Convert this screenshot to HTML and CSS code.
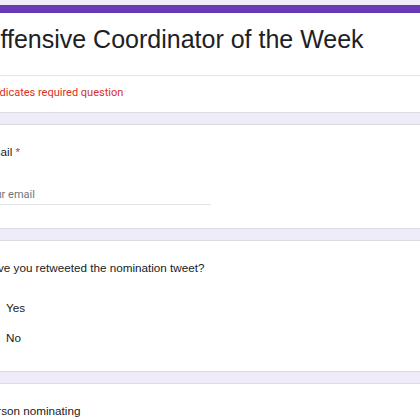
FILE: index.html
```html
<!DOCTYPE html>
<html lang="en">
<head>
    <meta charset="UTF-8">
    <meta name="viewport" content="width=device-width, initial-scale=1.0">
    <title>Offensive Coordinator of the Week</title>
    <link rel="stylesheet" href="styles.css">
</head>
<body>

    <div class="form">
        <div class="card title-card">
            <div class="title-head">
                <h1>Offensive Coordinator of the Week</h1>
            </div>
            <div class="title-note">
                <span class="required-note">* Indicates required question</span>
            </div>
        </div>

        <div class="card">
            <label class="question" for="email">Email <span class="mandatory">*</span></label>
            <div class="field">
                <input type="text" id="email" placeholder="Your email">
            </div>
        </div>

        <div class="card">
            <div class="question">Have you retweeted the nomination tweet?</div>
            <div class="options">
                <label class="option"><span class="radio"></span>Yes</label>
                <label class="option"><span class="radio"></span>No</label>
            </div>
        </div>

        <div class="card">
            <div class="question">Person nominating</div>
        </div>
    </div>

</body>
</html>
```

FILE: styles.css
```css
* {
    box-sizing: border-box;
    margin: 0;
    padding: 0;
}
html, body {
    overflow: hidden;
}
body {
    font-family: "Liberation Sans", Arial, sans-serif;
    background-color: #f0ebf8;
    color: #202124;
    padding-top: 5px;
}
.form {
    width: 640px;
    margin-left: -36px;
}
.card {
    background: white;
    border: 1px solid #dadce0;
    border-radius: 8px;
    padding: 19px 18px 18px;
    margin-bottom: 11px;
}
.title-card {
    border-top: 8px solid #673ab7;
    padding: 0;
}
.title-head {
    padding: 11px 18px 21px 16px;
}
h1 {
    font-weight: normal;
    font-size: 25px;
    line-height: 30px;
}
.title-note {
    border-top: 1px solid #e6e6e6;
    padding: 9px 18px 11px;
}
.required-note {
    font-family: Roboto, sans-serif;
    font-size: 11px;
    line-height: 16px;
    color: #d93025;
    display: block;
}
.question {
    display: block;
    font-size: 11.7px;
    line-height: 16px;
}
.mandatory {
    color: #d93025;
}
.field {
    width: 228px;
    margin-top: 27px;
    padding-bottom: 1px;
    border-bottom: 1px solid #e3e3e3;
    margin-bottom: 5px;
}
.field input {
    display: block;
    border: none;
    outline: none;
    width: 100%;
    font-family: Roboto, sans-serif;
    font-size: 11px;
    line-height: 16px;
    height: 16px;
    color: #202124;
    background: transparent;
}
.field input::placeholder {
    color: #70757a;
}
.options {
    margin-top: 17px;
}
.option {
    display: flex;
    align-items: center;
    height: 30px;
    font-size: 11.7px;
    line-height: 16px;
    gap: 8px;
}
.radio {
    width: 15px;
    height: 15px;
    border: 2px solid #5f6368;
    border-radius: 50%;
}
```
